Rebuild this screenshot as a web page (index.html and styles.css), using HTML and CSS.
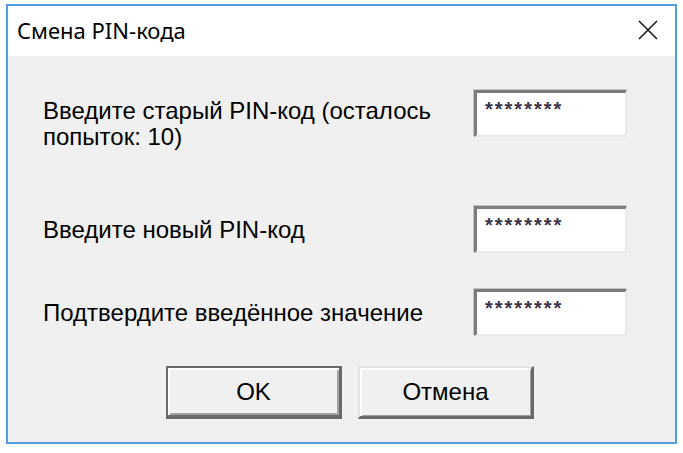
FILE: index.html
```html
<!DOCTYPE html>
<html lang="ru">
<head>
<meta charset="utf-8">
<title>Смена PIN-кода</title>
<link rel="stylesheet" href="styles.css">
</head>
<body>
<div class="window">
  <div class="titlebar">
    <span class="title">Смена PIN-кода</span>
    <span class="close" aria-label="Закрыть">
      <svg width="20" height="20" viewBox="0 0 20 20"><path d="M1 1 L19 19 M19 1 L1 19" stroke="#1a1a1a" stroke-width="1.6" fill="none"/></svg>
    </span>
  </div>
  <div class="content">
    <div class="row row-old">
      <div class="label label-old">Введите старый PIN-код (осталось попыток: 10)</div>
      <div class="field">********</div>
    </div>
    <div class="row row-new">
      <div class="label">Введите новый PIN-код</div>
      <div class="field">********</div>
    </div>
    <div class="row row-confirm">
      <div class="label">Подтвердите введённое значение</div>
      <div class="field">********</div>
    </div>
    <div class="buttons">
      <button class="btn btn-default">OK</button>
      <button class="btn">Отмена</button>
    </div>
  </div>
</div>
</body>
</html>
```

FILE: styles.css
```css
html, body {
  margin: 0;
  padding: 0;
  background: #ffffff;
}

body {
  font-family: "Liberation Sans", Arial, sans-serif;
  color: #000;
}

.window {
  margin: 4px 0 0 6px;
  width: 671px;
  height: 440px;
  box-sizing: border-box;
  border: 2px solid #4f9fe2;
  background: #f0f0f0;
  display: flex;
  flex-direction: column;
}

.titlebar {
  height: 50px;
  background: #ffffff;
  display: flex;
  align-items: center;
  justify-content: space-between;
  padding: 0 17px 0 9px;
  flex: none;
}

.title {
  font-family: "Noto Sans", "Open Sans", sans-serif;
  font-size: 22px;
  color: #000;
  margin-top: -3px;
}

.close {
  display: flex;
  width: 20px;
  height: 20px;
  margin-top: -2px;
}

.content {
  padding: 34px 0 0 35px;
  display: flex;
  flex-direction: column;
  font-size: 24px;
  line-height: 26px;
}

.row {
  display: flex;
  align-items: flex-start;
}

.label {
  width: 431px;
  flex: none;
}

.label-old {
  margin-top: 8px;
  width: 420px;
  margin-right: 11px;
}

.row-new {
  margin-top: 56px;
  align-items: center;
}

.row-confirm {
  margin-top: 36px;
  align-items: center;
}

.field {
  width: 153px;
  height: 47px;
  box-sizing: border-box;
  background: #ffffff;
  border-style: solid;
  border-width: 3px 2px 2px 3px;
  border-color: #7c7c7c #e9e9e9 #e9e9e9 #7c7c7c;
  box-shadow: -1px -1px 0 #c4c4c4;
  padding: 5px 0 0 8px;
  font-size: 20px;
  line-height: 22px;
  letter-spacing: 2px;
  font-weight: bold;
  color: #3a3348;
  overflow: hidden;
}

.buttons {
  display: flex;
  gap: 16px;
  margin-top: 30px;
  padding-left: 123px;
}

.btn {
  width: 176px;
  height: 53px;
  box-sizing: border-box;
  font-family: "Liberation Sans", Arial, sans-serif;
  font-size: 24px;
  color: #000;
  background: #f0f0f0;
  border-style: solid;
  border-width: 2px 3px 3px 2px;
  border-color: #e3e3e3 #6a6a6a #6a6a6a #e3e3e3;
  box-shadow: inset 2px 2px 0 #ffffff, inset -1px -1px 0 #a0a0a0;
  padding: 0;
  margin: 0;
}

.btn-default {
  border-width: 2px 3px 4px 2px;
  border-color: #6a6a6a;
  box-shadow: inset 2px 2px 0 #ffffff, inset -2px -2px 0 #a0a0a0;
}
```
